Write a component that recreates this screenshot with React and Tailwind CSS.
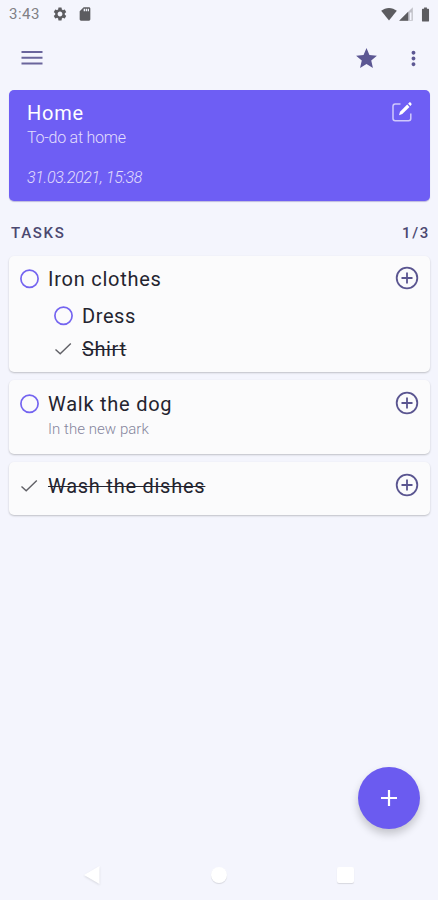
import React from 'react';
import { MdSettings, MdSdCard, MdStar, MdMoreVert, MdBatteryFull } from 'react-icons/md';

const tasks = [
  {
    title: 'Iron clothes',
    done: false,
    box: 'h-[116px] pt-[11px]',
    subtasks: [
      { title: 'Dress', done: false },
      { title: 'Shirt', done: true },
    ],
  },
  { title: 'Walk the dog', note: 'In the new park', done: false, box: 'h-[74px] pt-3' },
  { title: 'Wash the dishes', done: true, box: 'h-[53px] pt-3' },
];

function CheckMark({ done }) {
  return (
    <svg className="w-5 h-5 shrink-0" viewBox="0 0 20 20" fill="none">
      {done ? (
        <path d="M2.5 10.5 L7.2 14.8 L17.8 4.5" stroke="#606066" strokeWidth="1.4" />
      ) : (
        <circle cx="10.5" cy="9.7" r="8.6" stroke="#7464f0" strokeWidth="1.7" />
      )}
    </svg>
  );
}

function AddSubtask() {
  return (
    <svg className="w-6 h-6 shrink-0 -mt-0.5" viewBox="0 0 24 24" fill="none" stroke="#5a5590" strokeWidth="1.8">
      <circle cx="12" cy="12" r="10.3" />
      <path d="M12 6.5v11M6.5 12h11" />
    </svg>
  );
}

function StatusBar() {
  return (
    <div className="h-7 flex items-center justify-between pl-[9px] pr-1 text-[#5c5c60]">
      <div className="flex items-center">
        <span className="w-[43px] text-[15px] leading-7 tracking-[0.5px] text-[#808085]">3:43</span>
        <MdSettings className="w-4 h-4" />
        <MdSdCard className="w-4 h-4 ml-[9px]" />
      </div>
      <div className="flex items-center">
        <svg className="w-4 h-[14px]" viewBox="0 0 16 14" fill="currentColor">
          <path d="M8 13.5 L0.2 3.8 C4.6 -0.1 11.4 -0.1 15.8 3.8 Z" />
        </svg>
        <svg className="w-[14px] h-[14px] ml-[2px]" viewBox="0 0 14 14" fill="currentColor">
          <path d="M0.2 13.8 L13.8 0.2 V13.8 Z" opacity="0.35" />
          <path d="M0.2 13.8 L9.2 4.8 V13.8 Z" />
          <path d="M10.8 5.5 H12.5 V13 H10.8 Z" fill="#f4f5fd" />
        </svg>
        <MdBatteryFull className="w-[17px] h-[17px] ml-1" />
      </div>
    </div>
  );
}

function AppBar() {
  return (
    <div className="h-[62px] flex items-start justify-between pt-[18px] pl-[21px] pr-[13px]">
      <svg className="w-[22px] h-6" viewBox="0 0 22 24" stroke="#6a659c" strokeWidth="2">
        <path d="M0.5 6h21M0.5 11.7h21M0.5 17.5h21" />
      </svg>
      <div className="flex items-center gap-[23px] text-[#5c5793]">
        <MdStar className="w-[25px] h-[25px]" />
        <MdMoreVert className="w-[23px] h-[23px]" />
      </div>
    </div>
  );
}

function ListHeader() {
  return (
    <div className="h-[111px] rounded-[5px] bg-[#6e5ef4] shadow-[0_1px_1px_rgba(60,50,150,0.3)] pl-[18px] pr-[18px] pt-[11px] flex justify-between text-white">
      <div className="flex flex-col">
        <span className="text-[20px] leading-6 tracking-[0.8px]">Home</span>
        <span className="mt-px text-[16px] leading-6 font-light tracking-[-0.25px] text-[#e3dffd]">To-do at home</span>
        <span className="mt-4 text-[16px] leading-6 font-light italic tracking-[-0.35px] text-[#e3dffd]">31.03.2021, 15:38</span>
      </div>
      <svg className="w-5 h-5 mt-[1px]" viewBox="0 0 20 20" fill="none">
        <path d="M8.5 2H3.2C2 2 1 3 1 4.2V16.6C1 17.9 2 18.8 3.2 18.8H16.6C17.9 18.8 18.8 17.9 18.8 16.6V11.5" stroke="#d0c9fc" strokeWidth="1.5" />
        <path d="M7 13.2 L8 9.8 L15.2 2.6 L17.5 4.9 L10.3 12.1 Z" fill="white" />
        <path d="M16.1 1.7 L17.2 0.6 C17.6 0.2 18.2 0.2 18.6 0.6 L19.4 1.4 C19.8 1.8 19.8 2.4 19.4 2.8 L18.4 3.9 Z" fill="white" />
      </svg>
    </div>
  );
}

function TaskCard({ task }) {
  return (
    <div className={`${task.box} rounded-[5px] bg-[#fbfbfc] shadow-[0_1px_2px_rgba(0,0,0,0.22)] pl-[10px] pr-[11px]`}>
      <div className="flex items-center justify-between h-6">
        <div className="flex items-center gap-[9px]">
          <CheckMark done={task.done} />
          <span className={`text-[20px] leading-6 tracking-[0.75px] ${task.done ? 'line-through decoration-1' : ''}`}>{task.title}</span>
        </div>
        <AddSubtask />
      </div>
      {task.note && <p className="pt-px pl-[29px] text-[15px] leading-6 font-light tracking-[0.05px] text-[#85859c]">{task.note}</p>}
      {task.subtasks && (
        <div className="pl-[34px] pt-2">
          {task.subtasks.map((sub) => (
            <div key={sub.title} className="h-[33px] flex items-center gap-[9px]">
              <CheckMark done={sub.done} />
              <span className={`text-[20px] leading-6 tracking-[0.6px] ${sub.done ? 'line-through decoration-1' : ''}`}>{sub.title}</span>
            </div>
          ))}
        </div>
      )}
    </div>
  );
}

function NavBar() {
  return (
    <div className="h-[50px] flex items-center justify-between pl-[83px] pr-[84px]">
      <svg className="w-[18px] h-5 drop-shadow-[0_1px_1px_rgba(0,0,0,0.12)]" viewBox="0 0 18 20" fill="white">
        <path d="M1 10 L16.5 1 V19 Z" />
      </svg>
      <div className="w-4 h-4 rounded-full bg-white shadow-[0_1px_1px_rgba(0,0,0,0.12)]" />
      <div className="w-[17px] h-4 rounded-[2px] bg-white shadow-[0_1px_1px_rgba(0,0,0,0.12)]" />
    </div>
  );
}

export default function App() {
  return (
    <div className="relative w-full h-screen overflow-hidden flex flex-col bg-[#f4f5fd] text-[#24242f] font-['Roboto',sans-serif]">
      <StatusBar />
      <AppBar />
      <main className="flex-1 pl-[9px] pr-2">
        <ListHeader />
        <div className="h-[55px] pt-[9px] pl-[2px] flex items-center justify-between text-[15px] font-medium tracking-[1.7px] text-[#4b4870]">
          <span>TASKS</span>
          <span>1/3</span>
        </div>
        <div className="flex flex-col gap-2">
          {tasks.map((task) => (
            <TaskCard key={task.title} task={task} />
          ))}
        </div>
      </main>
      <NavBar />
      <button className="absolute right-[18px] bottom-[71px] w-[62px] h-[62px] rounded-full bg-[#6b5bf0] shadow-[0_5px_9px_rgba(0,0,0,0.2)] flex items-center justify-center">
        <svg className="w-4 h-4" viewBox="0 0 16 16" stroke="white" strokeWidth="2.2">
          <path d="M8 0v16M0 8h16" />
        </svg>
      </button>
    </div>
  );
}
